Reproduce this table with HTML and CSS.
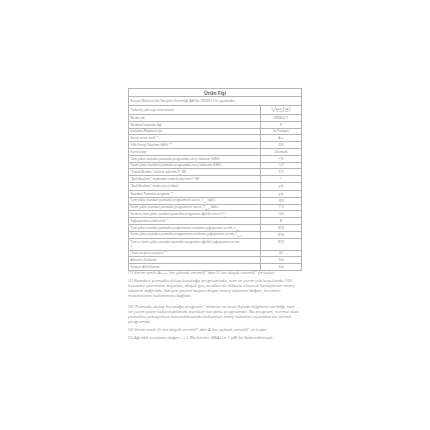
FILE: index.html
```html
<!DOCTYPE html>
<html lang="tr">
<head>
<meta charset="utf-8">
<title>Ürün Fişi</title>
<link rel="stylesheet" href="styles.css">
</head>
<body>
<div class="sheet">
  <table class="fiche">
    <colgroup>
      <col class="c-label">
      <col class="c-value">
    </colgroup>
    <tr class="r-title"><th colspan="2">Ürün Fişi</th></tr>
    <tr class="r-sub"><td colspan="2">Kurucu Makinelerde Enerjinin Verimliliği (AB) No 392/2012 ile uyumludur.</td></tr>
    <tr class="r-brand"><td>Tedarikçi adı veya ticari marka</td><td class="v brand">Vestel</td></tr>
    <tr><td>Model adı</td><td class="v">DR 8622 T</td></tr>
    <tr><td>Nominal kapasite (kg)</td><td class="v">8</td></tr>
    <tr><td>Kurutma Makinesi tipi</td><td class="v">Isı Pompalı</td></tr>
    <tr><td>Enerji verim sınıfı <sup>(1)</sup></td><td class="v">A++</td></tr>
    <tr><td>Yıllık Enerji Tüketimi (kWh) <sup>(2)</sup></td><td class="v">235</td></tr>
    <tr><td>Kontrol tipi</td><td class="v">Otomatik</td></tr>
    <tr><td>Tam yükte standart pamuklu programda enerji tüketimi (kWh)</td><td class="v">1,91</td></tr>
    <tr><td>Kısmi yükte standart pamuklu programda enerji tüketimi (kWh)</td><td class="v">1,07</td></tr>
    <tr><td>"Kapalı Modda" elektrik tüketimi P<sub>o</sub> (W)</td><td class="v">0,3</td></tr>
    <tr><td>"Açık Bırakma" modunda elektrik tüketimi P<sub>l</sub> (W)</td><td class="v">1</td></tr>
    <tr class="r-tall"><td>"Açık Bırakma" modu süresi (dak.)</td><td class="v">yok</td></tr>
    <tr><td>Standart Pamuklu program <sup>(3)</sup></td><td class="v">yok</td></tr>
    <tr><td>Tam yükte standart pamuklu programının süresi, T<sub>dry</sub> (dak.)</td><td class="v">189</td></tr>
    <tr><td>Kısmi yükte standart pamuklu programının süresi, T<sub>dry½</sub> (dak.)</td><td class="v">113</td></tr>
    <tr><td>Kısmi ve tam yükte standart pamuklu programın ağırlıklı süresi (T<sub>t</sub>)</td><td class="v">145</td></tr>
    <tr><td>Yoğuşturma verimi sınıfı <sup>(4)</sup></td><td class="v">B</td></tr>
    <tr><td>Tam yükte standart pamuklu programının ortalama yoğuşturma verimi, C<sub>dry</sub></td><td class="v">81%</td></tr>
    <tr><td>Kısmi yükte standart pamuklu programının ortalama yoğuşturma verimi, C<sub>dry½</sub></td><td class="v">81%</td></tr>
    <tr class="r-double"><td>Tam ve kısmi yükte standart pamuklu programın ağırlıklı yoğuşturma verimi,<br>C<sub>t</sub></td><td class="v top">81%</td></tr>
    <tr><td>Ürün ses gücü seviyesi <sup>(5)</sup></td><td class="v">65</td></tr>
    <tr><td>Ankastre Kullanım</td><td class="v">Yok</td></tr>
    <tr><td>Serbest Alt Kullanım</td><td class="v">Yok</td></tr>
  </table>
  <div class="notes">
    <p>(1) Verim sınıfı: A+++ (en yüksek verimli)" den D (en düşük verimli)" ye kadar</p>
    <p>(2) Standart pamuklu dolap kurutuğu programında, tam ve yarım yük koşulunda 160 kurutma çevrimine dayanan, düşük güç modları da dikkate alınarak hesaplanan enerji tüketim değeridir. Gerçek çevrim başına düşen enerji tüketimi değeri, kurutma makinesinin kullanımına bağlıdır.</p>
    <p class="gap">(3) "Pamuklu dolap kurutuğu programı" etikette ve ürün fişinde bilgilerin verildiği, tam ve yarım yükte kullanılabilecek standart kurutma programıdır. Bu program, normal ıslak pamuklu çamaşırların kurutulmasında kullanılan enerji tüketimi açısından en verimli programdır.</p>
    <p>(4) Verim sınıfı: G (en düşük verimli)" den A (en yüksek verimli)" ye kadar</p>
    <p>(5) Ağırlıklı ortalama değeri — L Wa birimi: dB(A) re 1 pW ile ifade edilmiştir.</p>
  </div>
</div>
</body>
</html>
```

FILE: styles.css
```css
html, body {
  margin: 0;
  padding: 0;
  background: #ffffff;
}

body {
  font-family: "Open Sans", "Liberation Sans", sans-serif;
  color: #7a7a7a;
}

.sheet {
  width: 173px;
  margin: 88px 0 0 128px;
}

.fiche {
  width: 173px;
  border-collapse: collapse;
  table-layout: fixed;
}

.c-label {
  width: 132px;
}

.c-value {
  width: 41px;
}

.fiche td,
.fiche th {
  border: 1px solid #b4b4b4;
  font-size: 3.1px;
  line-height: 4px;
  padding: 0 1.5px;
  height: 5.8px;
  text-align: left;
  vertical-align: middle;
  font-weight: 400;
  white-space: nowrap;
}

.fiche td.v {
  text-align: center;
}

.fiche .r-title th {
  height: 7px;
  text-align: center;
  font-size: 5px;
  line-height: 6px;
  font-weight: 700;
  color: #666666;
}

.fiche .r-sub td {
  height: 7.7px;
}

.fiche .r-brand td {
  height: 8.3px;
}

.fiche td.brand {
  font-size: 7px;
  line-height: 8px;
  font-weight: 300;
  color: #8a8a8a;
}

.fiche .r-tall td {
  height: 7px;
}

.fiche .r-double td {
  height: 10px;
  white-space: normal;
}

.fiche td.top {
  vertical-align: top;
  padding-top: 1px;
}

.fiche sup,
.fiche sub {
  font-size: 2.2px;
  line-height: 0;
}

.notes {
  width: 172px;
}

.notes p {
  margin: 0;
  font-size: 4.2px;
  line-height: 4.9px;
  color: #8a8a8a;
}

.notes p + p {
  margin-top: 3.5px;
}

.notes p.gap {
  margin-top: 6px;
}
```
